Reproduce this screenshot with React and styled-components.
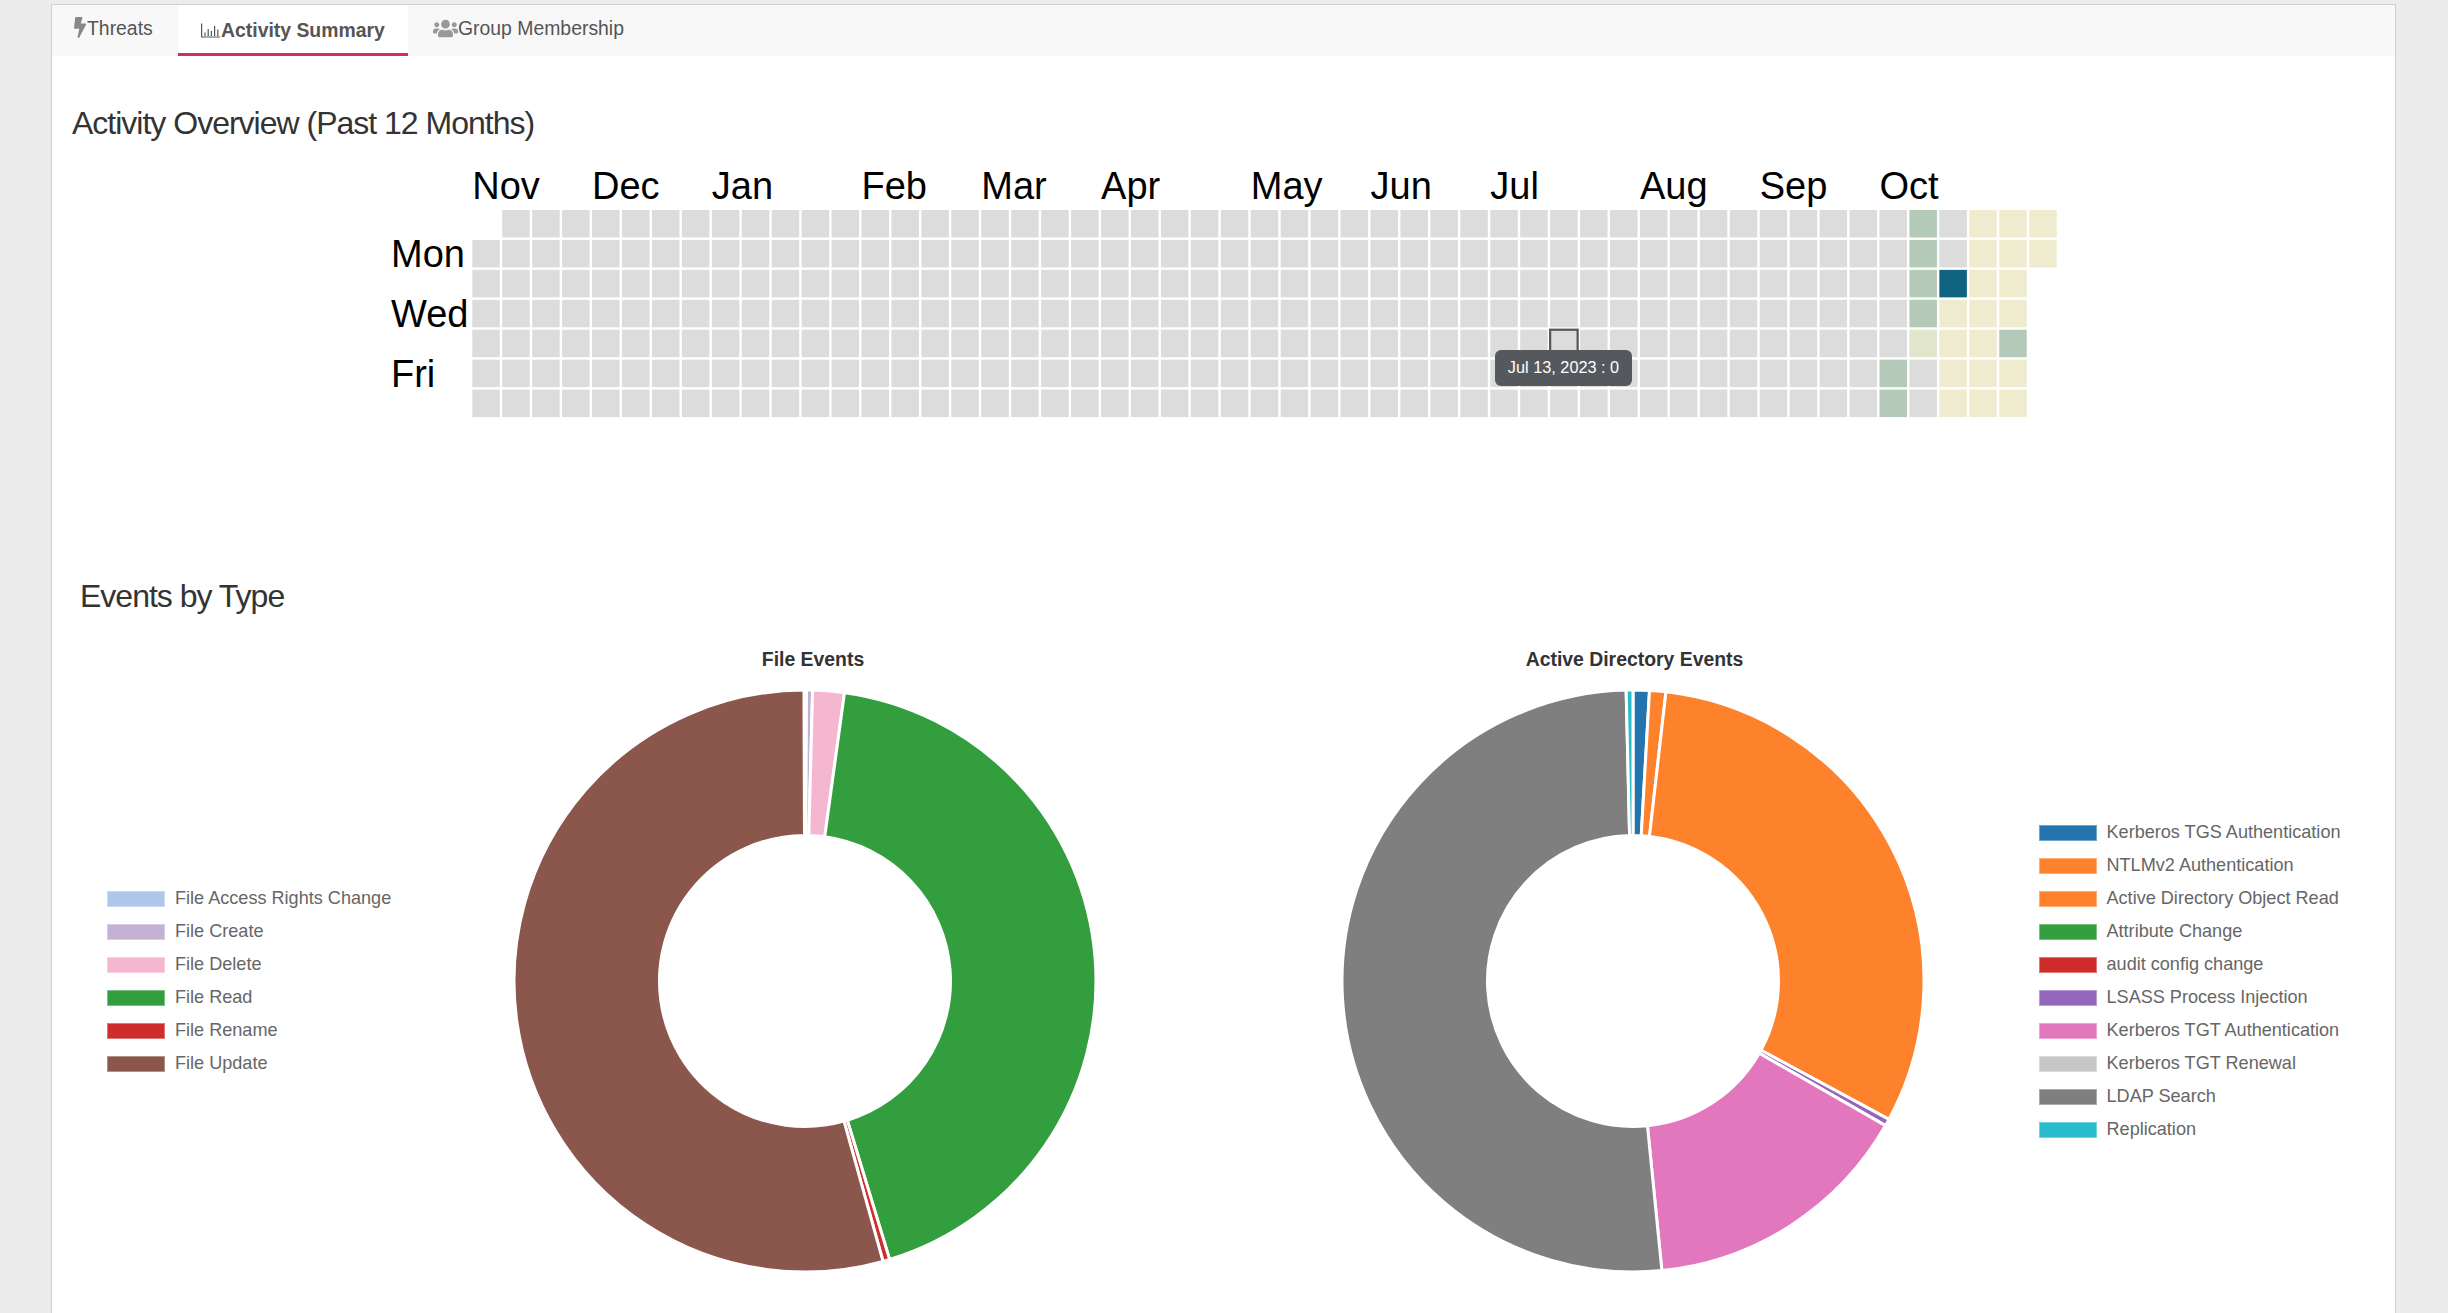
import React from "react";
import styled, { createGlobalStyle } from "styled-components";
import { FaBolt, FaUsers } from "react-icons/fa";

const Global = createGlobalStyle`
  html, body { margin: 0; padding: 0; background: #ececec; }
  body { height: 1313px; overflow: hidden; font-family: "Liberation Sans", Arial, sans-serif; }
`;

const Page = styled.div`
  padding: 4px 52px 0 51px;
  height: 1309px;
`;
const Card = styled.main`
  background: #fff;
  border: 1px solid #cfcfcf;
  border-bottom: 0;
  height: 1309px;
  overflow: hidden;
`;
const TabBar = styled.nav`
  display: flex;
  height: 51px;
  background: #f8f8f8;
`;
const Tab = styled.div`
  display: flex;
  align-items: flex-start;
  gap: ${p => p.$gap}px;
  box-sizing: border-box;
  width: ${p => p.$width}px;
  padding: ${p => (p.$active ? 13 : 11)}px 0 0 ${p => p.$left}px;
  font-size: 19.4px;
  line-height: 24px;
  color: #555;
  font-weight: ${p => (p.$active ? 700 : 400)};
  background: ${p => (p.$active ? "#fff" : "transparent")};
  border-bottom: ${p => (p.$active ? "3px solid #d62c65" : "0")};
`;
const TabIcon = styled.span`
  display: flex;
  color: ${p => p.$color};
  margin-top: ${p => p.$top}px;
  flex: none;
`;
const Heading = styled.h2`
  margin: ${p => p.$top}px 0 0 ${p => p.$left}px;
  font-size: 32px;
  line-height: 36px;
  font-weight: 400;
  letter-spacing: -1px;
  color: #333;
`;
const HeatWrap = styled.div`
  position: relative;
  width: 1680px;
  height: 260px;
  margin: 19px 0 0 333px;
`;
const HeatSvg = styled.svg`
  display: block;
`;
const MonthLabel = styled.text`
  font-size: 38px;
  fill: #000;
  font-family: "Liberation Sans", Arial, sans-serif;
`;
const Tooltip = styled.div`
  position: absolute;
  left: 1110px;
  top: 190px;
  width: 137px;
  height: 36px;
  border-radius: 6px;
  background: #55595d;
  color: #fff;
  font-size: 16.3px;
  line-height: 35px;
  text-align: center;
`;
const ChartsGrid = styled.section`
  display: grid;
  grid-template-columns: 461px 584px 243.5px 584px 1fr;
  grid-template-rows: 41.5px 585.5px;
  margin-top: 32px;
`;
const ChartTitle = styled.h3`
  grid-column: ${p => p.$col};
  grid-row: 1;
  margin: 0;
  padding-left: ${p => p.$shift}px;
  font-size: 19.4px;
  line-height: 27px;
  font-weight: 700;
  color: #333;
  text-align: center;
`;
const Donut = styled.svg`
  grid-column: ${p => p.$col};
  grid-row: 2;
  align-self: end;
  display: block;
`;
const Legend = styled.ul`
  grid-column: ${p => p.$col};
  grid-row: 2;
  align-self: center;
  list-style: none;
  margin: 0;
  padding: 2px 0 0 ${p => p.$left}px;
`;
const LegendRow = styled.li`
  display: flex;
  align-items: center;
  gap: 10px;
  height: 33px;
  font-size: 18.1px;
  color: #666;
`;
const Swatch = styled.i`
  display: block;
  box-sizing: border-box;
  width: 58px;
  height: 16px;
  background: ${p => p.$color};
  border: 1px solid rgba(255, 255, 255, 0.35);
`;

const CX0 = 87.3, CY0 = 50, PX = 29.94, PY = 29.93, CELL = 27.5;
const months = [["Nov",0],["Dec",4],["Jan",8],["Feb",13],["Mar",17],["Apr",21],["May",26],["Jun",30],["Jul",34],["Aug",39],["Sep",43],["Oct",47]];
const days = [["Mon",107],["Wed",167],["Fri",227]];
const GREY = "#dcdcdc", PALE = "#eeebcf", GREEN = "#b5c9b8", BLUE = "#10637f", MIX = "#e1e5cc";
const special = {
  47: { 5: GREEN, 6: GREEN },
  48: { 0: GREEN, 1: GREEN, 2: GREEN, 3: GREEN, 4: MIX },
  49: { 2: BLUE, 3: PALE, 4: PALE, 5: PALE, 6: PALE },
  50: { 0: PALE, 1: PALE, 2: PALE, 3: PALE, 4: PALE, 5: PALE, 6: PALE },
  51: { 0: PALE, 1: PALE, 2: PALE, 3: PALE, 4: GREEN, 5: PALE, 6: PALE },
  52: { 0: PALE, 1: PALE },
};
const cells = [];
for (let c = 0; c < 53; c++) {
  for (let r = 0; r < 7; r++) {
    if (c === 0 && r === 0) continue;
    if (c === 52 && r > 1) continue;
    cells.push({ c, r, fill: special[c]?.[r] ?? GREY });
  }
}

const R = 291, r0 = 145.5, C = 292;
const pt = (rad, a) => {
  const t = ((a - 90) * Math.PI) / 180;
  return `${(C + rad * Math.cos(t)).toFixed(2)} ${(C + rad * Math.sin(t)).toFixed(2)}`;
};
const arc = (a, b) => {
  const large = b - a > 180 ? 1 : 0;
  return `M${pt(R, a)}A${R} ${R} 0 ${large} 1 ${pt(R, b)}L${pt(r0, b)}A${r0} ${r0} 0 ${large} 0 ${pt(r0, a)}Z`;
};

const fileSlices = [
  ["#aec7e8", 0, 0.3], ["#c5b0d5", 0.3, 1.5], ["#f5b6d0", 1.5, 7.8], ["#339e3e", 7.8, 163.1],
  ["#cf2d2c", 163.1, 164.45], ["#8b574c", 164.45, 359.8],
];
const adSlices = [
  ["#2475ae", 0, 3.25], ["#fe812c", 3.25, 6.5], ["#fe812c", 6.5, 118.4],
  ["#9467bd", 118.4, 119.8], ["#e377bd", 119.8, 174.3],
  ["#7f7f7f", 174.3, 358.65], ["#28bccd", 358.65, 360],
];
const fileLegend = [
  ["#aec7e8", "File Access Rights Change"], ["#c5b0d5", "File Create"], ["#f5b6d0", "File Delete"],
  ["#339e3e", "File Read"], ["#cf2d2c", "File Rename"], ["#8b574c", "File Update"],
];
const adLegend = [
  ["#2475ae", "Kerberos TGS Authentication"], ["#fe812c", "NTLMv2 Authentication"], ["#fe812c", "Active Directory Object Read"],
  ["#339e3e", "Attribute Change"], ["#cf2d2c", "audit config change"], ["#9467bd", "LSASS Process Injection"],
  ["#e377bd", "Kerberos TGT Authentication"], ["#c7c7c7", "Kerberos TGT Renewal"], ["#7f7f7f", "LDAP Search"], ["#28bccd", "Replication"],
];

const DonutChart = ({ col, slices }) => (
  <Donut $col={col} width="584" height="584" viewBox="0 0 584 584">
    {slices.map(([fill, a, b], i) => (
      <path key={i} d={arc(a, b)} fill={fill} stroke="#fff" strokeWidth="3" strokeLinejoin="bevel" />
    ))}
  </Donut>
);

const ChartLegend = ({ col, left, items }) => (
  <Legend $col={col} $left={left}>
    {items.map(([color, label]) => (
      <LegendRow key={label}><Swatch $color={color} />{label}</LegendRow>
    ))}
  </Legend>
);

const BarsIcon = () => (
  <svg width="19" height="15" viewBox="0 0 19 15" fill="none" stroke="#555" strokeWidth="1.2">
    <path d="M0.6 0.5V14H19" />
    <path d="M4 13V9.5M7.2 13V6M10.4 13V8M13.6 13V3M16.8 13V6.5" />
  </svg>
);

export default function App() {
  return (
    <Page>
      <Global />
      <Card>
        <TabBar>
          <Tab $width={126} $left={22} $gap={1}>
            <TabIcon $color="#888" $top={1}><FaBolt size={17} style={{ width: 12, height: 21 }} preserveAspectRatio="none" /></TabIcon>Threats
          </Tab>
          <Tab $width={230} $left={23} $gap={1} $active>
            <TabIcon $color="#555" $top={5}><BarsIcon /></TabIcon>Activity Summary
          </Tab>
          <Tab $width={240} $left={25} $gap={0}>
            <TabIcon $color="#999" $top={-0.5}><FaUsers size={25} /></TabIcon>Group Membership
          </Tab>
        </TabBar>

        <Heading $top={49} $left={20}>Activity Overview (Past 12 Months)</Heading>
        <HeatWrap>
          <HeatSvg width="1680" height="260" viewBox="0 0 1680 260">
            {months.map(([m, c]) => (
              <MonthLabel key={m} x={CX0 + c * PX} y={39}>{m}</MonthLabel>
            ))}
            {days.map(([d, y]) => (
              <MonthLabel key={d} x={6} y={y}>{d}</MonthLabel>
            ))}
            {cells.map(({ c, r, fill }) => (
              <rect key={`${c}-${r}`} x={CX0 + c * PX} y={CY0 + r * PY} width={CELL} height={CELL} fill={fill} />
            ))}
            <rect x={CX0 + 36 * PX} y={CY0 + 4 * PY} width={CELL} height={CELL} fill={GREY} stroke="#555" strokeWidth="2.2" />
          </HeatSvg>
          <Tooltip>Jul 13, 2023 : 0</Tooltip>
        </HeatWrap>

        <Heading $top={158} $left={28}>Events by Type</Heading>
        <ChartsGrid>
          <ChartTitle $col={2} $shift={16}>File Events</ChartTitle>
          <ChartTitle $col={4} $shift={4}>Active Directory Events</ChartTitle>
          <ChartLegend col={1} left={55} items={fileLegend} />
          <DonutChart col={2} slices={fileSlices} />
          <DonutChart col={4} slices={adSlices} />
          <ChartLegend col={5} left={114} items={adLegend} />
        </ChartsGrid>
      </Card>
    </Page>
  );
}
